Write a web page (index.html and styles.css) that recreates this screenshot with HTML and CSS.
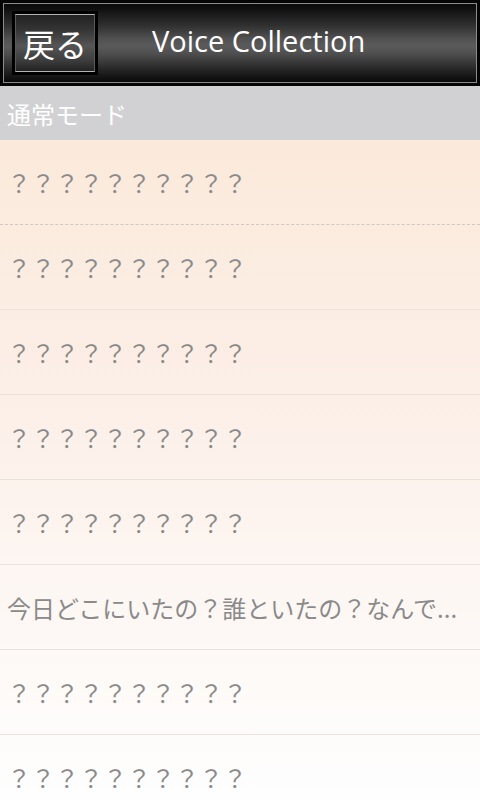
FILE: index.html
```html
<!DOCTYPE html>
<html lang="ja">
<head>
<meta charset="utf-8">
<link rel="stylesheet" href="styles.css">
</head>
<body>
<div class="header">
  <div class="bar">
    <div class="back"><div class="back-inner">戻る</div></div>
    <div class="title">Voice Collection</div>
  </div>
</div>
<div class="section">通常モード</div>
<div class="list">
  <div class="row first">？？？？？？？？？？</div>
  <div class="row">？？？？？？？？？？</div>
  <div class="row">？？？？？？？？？？</div>
  <div class="row">？？？？？？？？？？</div>
  <div class="row">？？？？？？？？？？</div>
  <div class="row">今日どこにいたの？誰といたの？なんで...</div>
  <div class="row">？？？？？？？？？？</div>
  <div class="row">？？？？？？？？？？</div>
</div>
</body>
</html>
```
FILE: styles.css
```css
html, body {
  margin: 0;
  padding: 0;
  width: 480px;
  height: 800px;
  overflow: hidden;
  background: #ffffff;
  font-family: "Noto Sans CJK JP", "Noto Sans", sans-serif;
}
.header {
  height: 86px;
  box-sizing: border-box;
  background: #050505;
  padding: 3px;
}
.bar {
  height: 80px;
  box-sizing: border-box;
  border: 1px solid #8c8c8c;
  background: linear-gradient(to bottom, #0a0a0a 0%, #0f0f0f 6%, #1c1c1c 14%, #2a2a2a 24%, #3c3c3c 34%, #505050 44%, #5a5a5a 54%, #4e4e4e 64%, #3a3a3a 74%, #262626 84%, #151515 93%, #0a0a0a 100%);
  display: flex;
  align-items: center;
}
.back {
  margin-left: 8px;
  width: 86px;
  height: 64px;
  box-sizing: border-box;
  background: #000;
  padding: 3px;
}
.back-inner {
  height: 100%;
  box-sizing: border-box;
  border: 1px solid #5a5a5a;
  border-top-color: #b4b4b4;
  border-bottom-color: #b4b4b4;
  background: linear-gradient(to bottom, #222 0%, #333 25%, #555 55%, #3e3e3e 80%, #222 100%);
  color: #fff;
  font-size: 32px;
  display: flex;
  align-items: center;
  justify-content: center;
  line-height: 1;
}
.title {
  margin-left: 54px;
  padding-bottom: 6px;
  color: #fff;
  font-family: "Open Sans", "Noto Sans", sans-serif;
  font-size: 29px;
  line-height: 1;
}
.section {
  height: 54px;
  background: #d1d1d3;
  color: #fff;
  font-size: 24px;
  padding-left: 7px;
  display: flex;
  align-items: center;
}
.list {
  background: linear-gradient(to bottom, #fbeadb 0%, #fcefe8 40%, #fdf6f2 65%, #fefefe 100%);
  height: 660px;
}
.row {
  height: 85px;
  box-sizing: border-box;
  border-bottom: 1px solid #ebe0da;
  color: #8a8a8a;
  font-size: 24px;
  padding-left: 7px;
  display: flex;
  align-items: center;
  white-space: nowrap;
  overflow: hidden;
}
.row.first {
  border-bottom: 1px dashed #cfc8c4;
}
```
